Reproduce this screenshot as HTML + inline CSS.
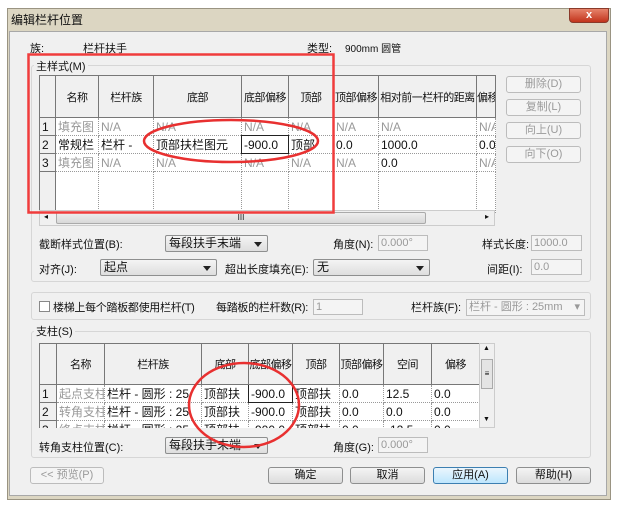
<!DOCTYPE html>
<html><head><meta charset="utf-8"><style>
*{margin:0;padding:0;box-sizing:border-box}
body{width:617px;height:507px;background:#fff;position:relative;overflow:hidden;font-family:"Liberation Sans","Noto Sans CJK SC",sans-serif;font-size:11px;color:#111}
.a{position:absolute;white-space:nowrap}
.frame{left:7px;top:8px;width:604px;height:492px;background:#dcd6c2;border:1px solid #9a9482}
.client{left:9px;top:31px;width:598px;height:465px;background:#f0f0f0;border:1px solid #a8a8a8}
.grp{border:1px solid #d6d6d6;border-radius:3px}
.lbl{background:#f0f0f0;padding:0 2px}
.btn{border:1px solid #8e8f8f;border-radius:3px;background:linear-gradient(#f4f4f4,#dcdcdc);text-align:center;line-height:14px;font-size:11px}
.btn.dis{border-color:#bcbcbc;background:#f4f4f4;color:#9a9a9a}
.inp{border:1px solid #bcbcbc;background:#f4f4f4;color:#999;font-size:11px;padding-left:2px;line-height:14px}
.dd{border:1px solid #8e8f8f;border-radius:2px;background:linear-gradient(#f4f4f4,#dedede);padding-left:3px;line-height:15px;font-size:12px}
.dd:after{content:"";position:absolute;right:5px;top:6px;border:4px solid transparent;border-top:5px solid #222;border-bottom:0}
table{border-collapse:collapse;table-layout:fixed;position:absolute;background:#fff}
td{border:1px dotted #999;height:17px;padding:0 2px;overflow:hidden;white-space:nowrap;font-size:12px}
th{border:1px solid #777;font-weight:normal;background:#f0f0f0;font-size:11px;white-space:nowrap;overflow:hidden;letter-spacing:-0.5px}
td.n{background:#f0f0f0;border:1px solid #777;padding-left:2px}
.g{color:#999}
</style></head><body>
<div class="a frame"></div>
<div class="a" style="left:11px;top:11px;font-size:12px">编辑栏杆位置</div>
<div class="a" style="left:569px;top:8px;width:40px;height:15px;border-radius:0 0 4px 4px;background:linear-gradient(#e6836b,#c2341c);border:1px solid #8a3a2a;color:#fff;text-align:center;font-weight:bold;line-height:13px;font-size:11px">x</div>
<div class="a client"></div>
<div class="a" style="left:30px;top:40px">族:</div>
<div class="a" style="left:83px;top:40px">栏杆扶手</div>
<div class="a" style="left:307px;top:40px">类型:</div>
<div class="a" style="left:345px;top:40px;font-size:10px">900mm 圆管</div>

<div class="a grp" style="left:31px;top:65px;width:560px;height:217px"></div>
<div class="a lbl" style="left:34px;top:58px">主样式(M)</div>

<table style="left:39px;top:75px;width:456px">
<colgroup><col style="width:16px"><col style="width:43px"><col style="width:55px"><col style="width:88px"><col style="width:47px"><col style="width:45px"><col style="width:45px"><col style="width:98px"><col style="width:19px"></colgroup>
<tr style="height:42px"><th></th><th>名称</th><th>栏杆族</th><th>底部</th><th>底部偏移</th><th>顶部</th><th>顶部偏移</th><th>相对前一栏杆的距离</th><th>偏移</th></tr>
<tr><td class="n">1</td><td class="g">填充图</td><td class="g">N/A</td><td class="g">N/A</td><td class="g">N/A</td><td class="g">N/A</td><td class="g">N/A</td><td class="g">N/A</td><td class="g">N/A</td></tr>
<tr><td class="n">2</td><td>常规栏</td><td>栏杆 -</td><td>顶部扶栏图元</td><td style="border:1px solid #222">-900.0</td><td>顶部</td><td>0.0</td><td>1000.0</td><td>0.0</td></tr>
<tr><td class="n">3</td><td class="g">填充图</td><td class="g">N/A</td><td class="g">N/A</td><td class="g">N/A</td><td class="g">N/A</td><td class="g">N/A</td><td>0.0</td><td class="g">N/A</td></tr>
<tr style="height:41px"><td class="n"></td><td></td><td></td><td></td><td></td><td></td><td></td><td></td><td></td></tr>
</table>
<div class="a" style="left:39px;top:210px;width:456px;height:16px;background:#f0f0f0;border:1px solid #ccc"></div>
<div class="a" style="left:56px;top:212px;width:370px;height:12px;background:linear-gradient(#eee,#d8d8d8);border:1px solid #aaa;border-radius:2px;text-align:center;font-size:8px;line-height:10px">III</div>
<div class="a" style="left:44px;top:212px;font-size:8px">◂</div><div class="a" style="left:485px;top:212px;font-size:8px">▸</div>

<div class="a btn dis" style="left:506px;top:76px;width:75px;height:17px">删除(D)</div>
<div class="a btn dis" style="left:506px;top:99px;width:75px;height:17px">复制(L)</div>
<div class="a btn dis" style="left:506px;top:122px;width:75px;height:17px">向上(U)</div>
<div class="a btn dis" style="left:506px;top:146px;width:75px;height:17px">向下(O)</div>

<div class="a" style="left:39px;top:236px">截断样式位置(B):</div>
<div class="a dd" style="left:165px;top:235px;width:103px;height:17px">每段扶手末端</div>
<div class="a" style="left:333px;top:236px">角度(N):</div>
<div class="a inp" style="left:378px;top:235px;width:50px;height:16px">0.000°</div>
<div class="a" style="left:482px;top:236px">样式长度:</div>
<div class="a inp" style="left:531px;top:235px;width:51px;height:16px">1000.0</div>
<div class="a" style="left:39px;top:261px">对齐(J):</div>
<div class="a dd" style="left:100px;top:259px;width:117px;height:17px">起点</div>
<div class="a" style="left:225px;top:261px">超出长度填充(E):</div>
<div class="a dd" style="left:313px;top:259px;width:117px;height:17px">无</div>
<div class="a" style="left:487px;top:261px">间距(I):</div>
<div class="a inp" style="left:531px;top:259px;width:51px;height:16px">0.0</div>

<div class="a grp" style="left:31px;top:292px;width:560px;height:28px"></div>
<div class="a" style="left:39px;top:301px;width:11px;height:11px;border:1px solid #888;background:#fff"></div>
<div class="a" style="left:53px;top:299px;letter-spacing:-0.3px">楼梯上每个踏板都使用栏杆(T)</div>
<div class="a" style="left:216px;top:299px;letter-spacing:-0.3px">每踏板的栏杆数(R):</div>
<div class="a inp" style="left:313px;top:299px;width:50px;height:16px">1</div>
<div class="a" style="left:411px;top:299px">栏杆族(F):</div>
<div class="a inp" style="left:466px;top:299px;width:119px;height:17px">栏杆 - 圆形 : 25mm <span style="position:absolute;right:4px">▾</span></div>

<div class="a grp" style="left:31px;top:331px;width:560px;height:127px"></div>
<div class="a lbl" style="left:34px;top:323px">支柱(S)</div>

<div class="a" style="left:39px;top:343px;width:456px;height:85px;overflow:hidden">
<table style="left:0;top:0;width:440px">
<colgroup><col style="width:17px"><col style="width:48px"><col style="width:97px"><col style="width:47px"><col style="width:44px"><col style="width:47px"><col style="width:44px"><col style="width:48px"><col style="width:48px"></colgroup>
<tr style="height:41px"><th></th><th>名称</th><th>栏杆族</th><th>底部</th><th>底部偏移</th><th>顶部</th><th>顶部偏移</th><th>空间</th><th>偏移</th></tr>
<tr><td class="n">1</td><td class="g">起点支柱</td><td>栏杆 - 圆形 : 25</td><td>顶部扶</td><td style="border:1px solid #222">-900.0</td><td>顶部扶</td><td>0.0</td><td>12.5</td><td>0.0</td></tr>
<tr><td class="n">2</td><td class="g">转角支柱</td><td>栏杆 - 圆形 : 25</td><td>顶部扶</td><td>-900.0</td><td>顶部扶</td><td>0.0</td><td>0.0</td><td>0.0</td></tr>
<tr><td class="n">3</td><td class="g">终点支柱</td><td>栏杆 - 圆形 : 25</td><td>顶部扶</td><td>-900.0</td><td>顶部扶</td><td>0.0</td><td>-12.5</td><td>0.0</td></tr>
</table>
<div class="a" style="left:440px;top:0;width:16px;height:85px;background:#f0f0f0;border:1px solid #ccc"></div>
<div class="a" style="left:442px;top:16px;width:12px;height:30px;background:#e4e4e4;border:1px solid #aaa;font-size:8px;text-align:center;line-height:28px">≡</div>
<div class="a" style="left:444px;top:2px;font-size:7px">▲</div><div class="a" style="left:444px;top:73px;font-size:7px">▼</div>
</div>

<div class="a" style="left:39px;top:439px">转角支柱位置(C):</div>
<div class="a dd" style="left:165px;top:437px;width:103px;height:17px">每段扶手末端</div>
<div class="a" style="left:333px;top:439px">角度(G):</div>
<div class="a inp" style="left:378px;top:437px;width:50px;height:16px">0.000°</div>

<div class="a btn dis" style="left:30px;top:467px;width:74px;height:17px">&lt;&lt; 预览(P)</div>
<div class="a btn" style="left:268px;top:467px;width:75px;height:17px">确定</div>
<div class="a btn" style="left:350px;top:467px;width:75px;height:17px">取消</div>
<div class="a btn" style="left:433px;top:467px;width:75px;height:17px;border-color:#3c7fb1;background:linear-gradient(#eaf6fd,#bee6fd)">应用(A)</div>
<div class="a btn" style="left:516px;top:467px;width:75px;height:17px">帮助(H)</div>

<svg class="a" style="left:0;top:0" width="617" height="507">
<rect x="28.5" y="54.5" width="305" height="158" fill="none" stroke="#f03c3c" stroke-width="2.5"/>
<ellipse cx="231" cy="141" rx="87" ry="21" fill="none" stroke="#e83030" stroke-width="2.5"/>
<ellipse cx="244" cy="405" rx="55" ry="42" fill="none" stroke="#e83030" stroke-width="2.5"/>
</svg>
</body></html>
